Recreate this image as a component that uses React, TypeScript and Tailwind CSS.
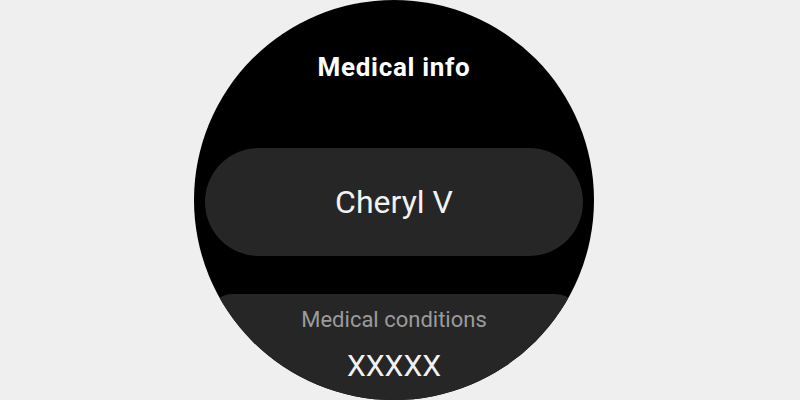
import React from 'react';

export default function App() {
  return (
    <div
      className="w-[800px] h-[400px] bg-[#efefef] overflow-hidden flex items-start pl-[194px]"
      style={{ fontFamily: 'Roboto, "Noto Sans", sans-serif' }}
    >
      <div className="w-[400px] h-[400px] shrink-0 rounded-full bg-black overflow-hidden flex flex-col items-center">
        <div className="mt-[52px] h-[30px] leading-[30px] text-[26px] font-bold text-white tracking-[0.7px]">
          Medical info
        </div>

        <div className="mt-[66px] w-[378px] h-[108px] rounded-full bg-[#262626] flex items-center justify-center shrink-0">
          <span className="text-[32px] leading-[32px] text-[#f2f2f2]">Cheryl V</span>
        </div>

        <div className="mt-[38px] w-[378px] shrink-0 rounded-[28px] bg-[#262626] pt-[12px] pb-[40px] flex flex-col items-center">
          <span className="text-[22px] leading-[28px] text-[#9b9b9b]">Medical conditions</span>
          <span className="mt-[14px] text-[30px] leading-[36px] text-[#f2f2f2]">XXXXX</span>
        </div>
      </div>
    </div>
  );
}
